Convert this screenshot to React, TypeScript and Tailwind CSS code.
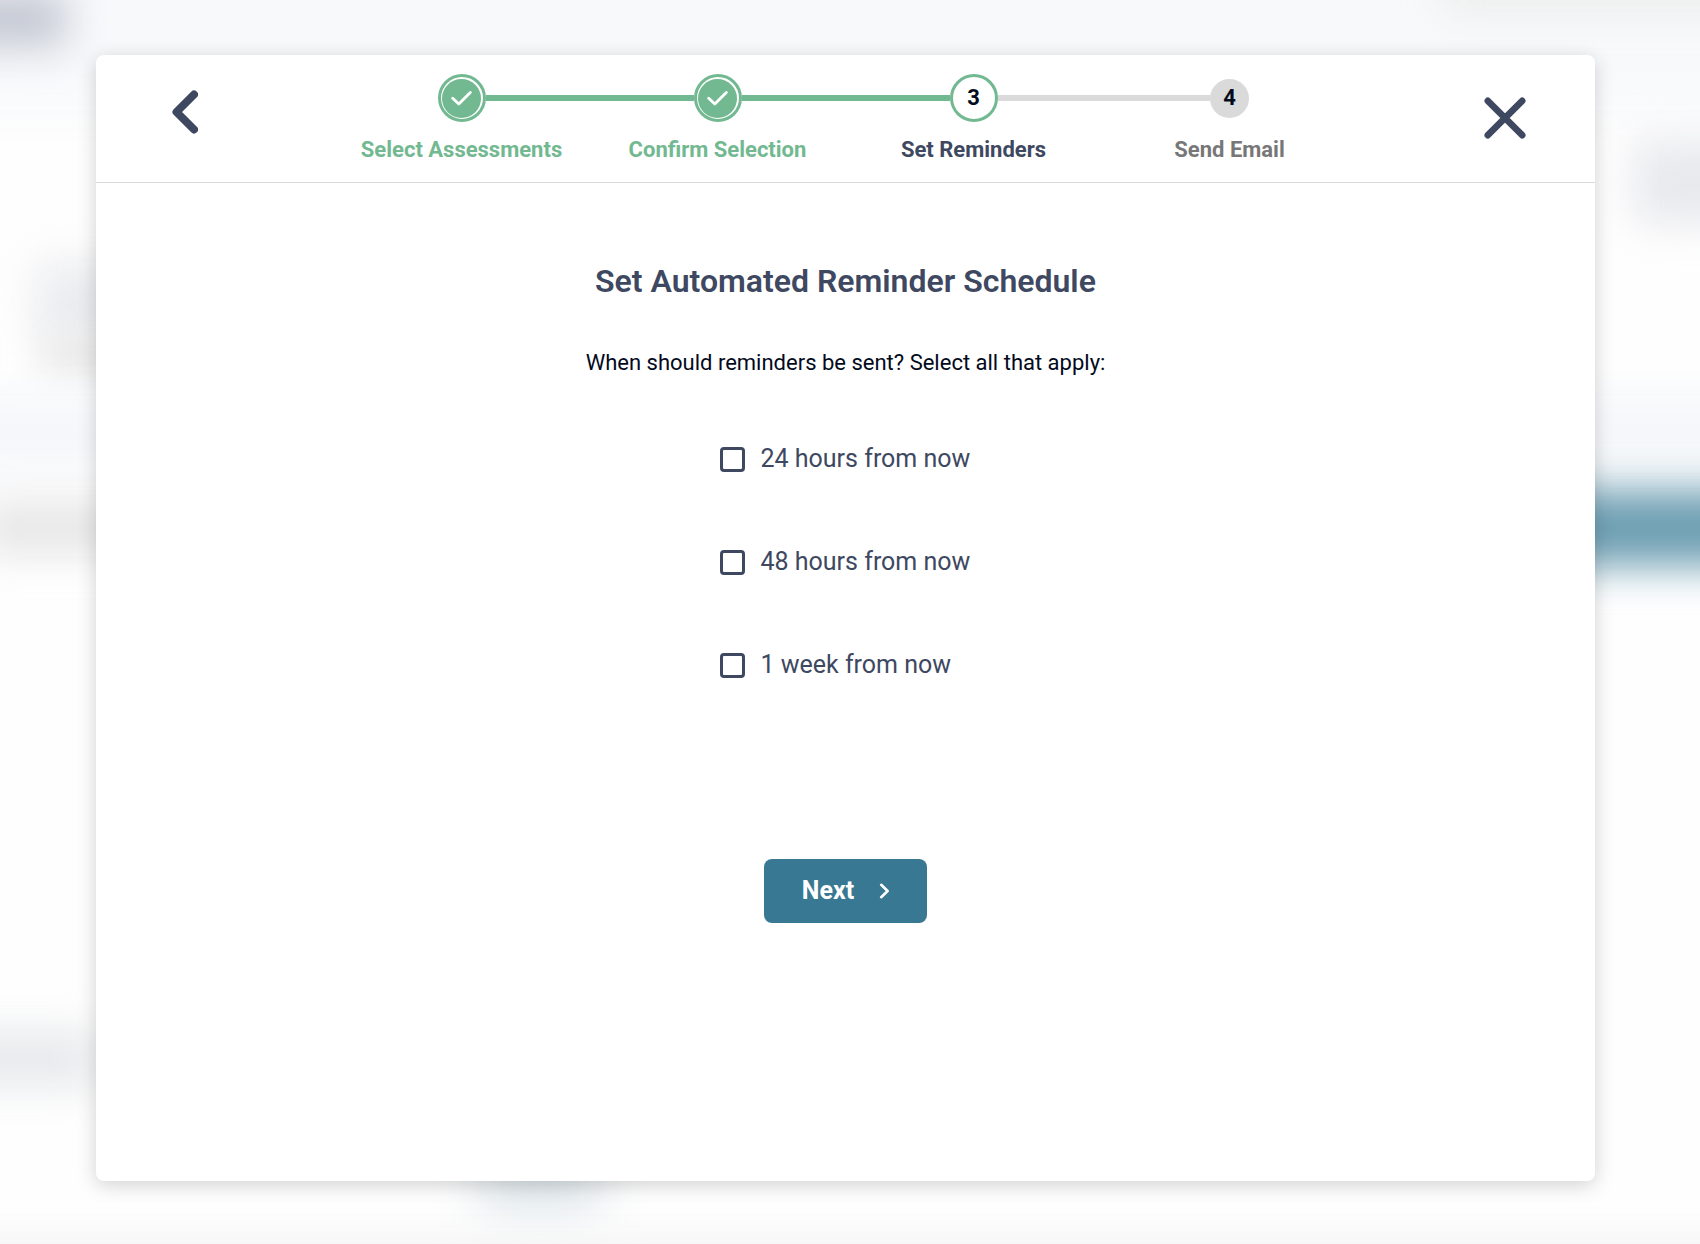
import { useState } from 'react';

type StepStatus = 'done' | 'current' | 'upcoming';

interface Step {
  id: number;
  label: string;
  status: StepStatus;
}

const steps: Step[] = [
  { id: 1, label: 'Select Assessments', status: 'done' },
  { id: 2, label: 'Confirm Selection', status: 'done' },
  { id: 3, label: 'Set Reminders', status: 'current' },
  { id: 4, label: 'Send Email', status: 'upcoming' }
];

const reminderOptions = [
  { id: '24h', label: '24 hours from now' },
  { id: '48h', label: '48 hours from now' },
  { id: '1w', label: '1 week from now' }
];

function StepMarker({ step }: { step: Step }) {
  switch (step.status) {
    case 'done':
      return (
        <span className="flex size-12 shrink-0 items-center justify-center rounded-full border-[3px] border-[#72b991] bg-white">
          <span className="flex size-[39px] items-center justify-center rounded-full bg-[#72b991]">
            <svg className="h-[15px] w-[21px]" viewBox="0 0 21 15" fill="none" stroke="white" strokeWidth="2.8" strokeLinecap="round" strokeLinejoin="round" aria-hidden="true">
              <path d="M1.7 7.2 7.8 13.1 19.3 1.6" />
            </svg>
          </span>
        </span>
      );
    case 'current':
      return (
        <span className="flex size-12 shrink-0 items-center justify-center rounded-full border-[3px] border-[#72b991] bg-white text-[22px] leading-8 font-bold text-[#030a1c]">
          {step.id}
        </span>
      );
    default:
      return (
        <span className="flex size-[39px] shrink-0 items-center justify-center rounded-full bg-[#dadada] text-[22px] leading-8 font-bold text-[#030a1c]">
          {step.id}
        </span>
      );
  }
}

function getLabelColor(status: StepStatus) {
  switch (status) {
    case 'done':
      return 'text-[#72b991]';
    case 'current':
      return 'text-[#3e4861]';
    default:
      return 'text-[#777777]';
  }
}

function Stepper() {
  const getLine = (step?: Step) => {
    if (!step) return 'bg-transparent';
    return step.status === 'upcoming' ? 'bg-[#dadada]' : 'bg-[#72b991]';
  };

  return (
    <ol className="flex pt-[19px] pb-4">
      {steps.map((step, i) => (
        <li key={step.id} className="flex min-w-0 flex-1 flex-col items-center gap-3">
          <div className="flex h-12 w-full items-center">
            <span className={`h-[6px] flex-1 ${i === 0 ? 'bg-transparent' : getLine(step)}`} />
            <StepMarker step={step} />
            <span className={`h-[6px] flex-1 ${getLine(steps[i + 1])}`} />
          </div>
          <span className={`text-center text-[22px] leading-8 font-bold ${getLabelColor(step.status)}`}>{step.label}</span>
        </li>
      ))}
    </ol>
  );
}

// Out-of-focus page behind the dialog
function Backdrop() {
  return (
    <div className="absolute inset-0 overflow-hidden bg-[#fefefe]" aria-hidden="true">
      <div className="absolute -inset-x-20 -top-20 h-[190px] bg-[#f7f9fb] blur-[24px]" />
      <div className="absolute -top-2 -left-16 h-[54px] w-[130px] bg-[#c2c6d1] blur-[20px]" />
      <div className="absolute -top-10 -right-16 h-[52px] w-[320px] bg-[#ededec] blur-[18px]" />
      <div className="absolute top-[140px] -right-16 h-[84px] w-[130px] bg-[#e8e9ed] blur-[20px]" />
      <div className="absolute top-[262px] left-[36px] h-[80px] w-[160px] bg-[#ebecef] blur-[20px]" />
      <div className="absolute top-[335px] left-[44px] h-[40px] w-[160px] bg-[#e8e8e8] blur-[18px]" />
      <div className="absolute -inset-x-20 top-[396px] h-[76px] bg-[#f5f7fa] blur-[20px]" />
      <div className="absolute top-[500px] -left-4 h-[56px] w-[300px] bg-[#e8e8e8] blur-[18px]" />
      <div className="absolute top-[490px] -right-24 h-[76px] w-[360px] bg-[#6d9eb2] blur-[20px]" />
      <div className="absolute top-[1032px] -left-16 h-[54px] w-[160px] bg-[#e6e8eb] blur-[20px]" />
      <div className="absolute top-[1130px] left-[480px] h-[80px] w-[120px] bg-[#dde5ea] blur-[24px]" />
      <div className="absolute -inset-x-20 -bottom-16 h-[70px] bg-[#f3f3f3] blur-[18px]" />
    </div>
  );
}

export default function App() {
  const [selected, setSelected] = useState<string[]>([]);

  const toggle = (id: string) => {
    setSelected((prev) => (prev.includes(id) ? prev.filter((item) => item !== id) : [...prev, id]));
  };

  return (
    <div className="relative flex min-h-screen flex-col pt-[55px] pr-[105px] pb-[63px] pl-24 font-[Roboto,sans-serif]">
      <Backdrop />

      <main role="dialog" aria-labelledby="dialog-title" className="relative flex flex-1 flex-col rounded-lg bg-white shadow-[0_4px_20px_rgba(0,0,0,0.18)]">
        <header className="grid grid-cols-[1fr_minmax(0,1024px)_1fr] items-start border-b border-[#dadada]">
          <button type="button" aria-label="Back" className="mt-[35px] ml-[76px] justify-self-start text-[#3e4861]">
            <svg className="h-11 w-[26px]" viewBox="0 0 26 44" fill="none" stroke="currentColor" strokeWidth="8" strokeLinecap="round" strokeLinejoin="round">
              <path d="M22 4.5 4.5 22 22 39.5" />
            </svg>
          </button>

          <Stepper />

          <button type="button" aria-label="Close" className="mt-[42px] mr-[69px] justify-self-end text-[#3e4861]">
            <svg className="size-[42px]" viewBox="0 0 42 42" fill="none" stroke="currentColor" strokeWidth="6.6" strokeLinecap="round">
              <path d="M3.8 3.8 38.2 38.2M38.2 3.8 3.8 38.2" />
            </svg>
          </button>
        </header>

        <section className="flex flex-col items-center px-6 pt-[78px] pb-16">
          <h1 id="dialog-title" className="text-center text-[32px] leading-10 font-semibold text-[#3e4861]">
            Set Automated Reminder Schedule
          </h1>
          <p className="mt-[46px] text-center text-[22px] leading-8 text-[#030a1c]">
            When should reminders be sent? Select all that apply:
          </p>

          <div className="mt-16 flex w-[252px] flex-col gap-[71px]">
            {reminderOptions.map((option) => (
              <label key={option.id} className="flex items-center gap-4 text-[25px] leading-8 whitespace-nowrap text-[#3e4861]">
                <input
                  type="checkbox"
                  checked={selected.includes(option.id)}
                  onChange={() => toggle(option.id)}
                  className="size-[25px] shrink-0 appearance-none rounded border-[3px] border-[#3e4861] bg-white checked:bg-[#3e4861]"
                />
                {option.label}
              </label>
            ))}
          </div>

          <button type="button" className="mt-[178px] flex h-16 items-center gap-[25px] rounded-lg bg-[#387892] pr-[37px] pl-[38px] text-[25px] leading-8 font-bold text-white">
            Next
            <svg className="h-4 w-[11px]" viewBox="0 0 11 16" fill="none" stroke="currentColor" strokeWidth="2.6" strokeLinecap="round" strokeLinejoin="round" aria-hidden="true">
              <path d="M2.2 1.8 8.6 8 2.2 14.2" />
            </svg>
          </button>
        </section>
      </main>
    </div>
  );
}
